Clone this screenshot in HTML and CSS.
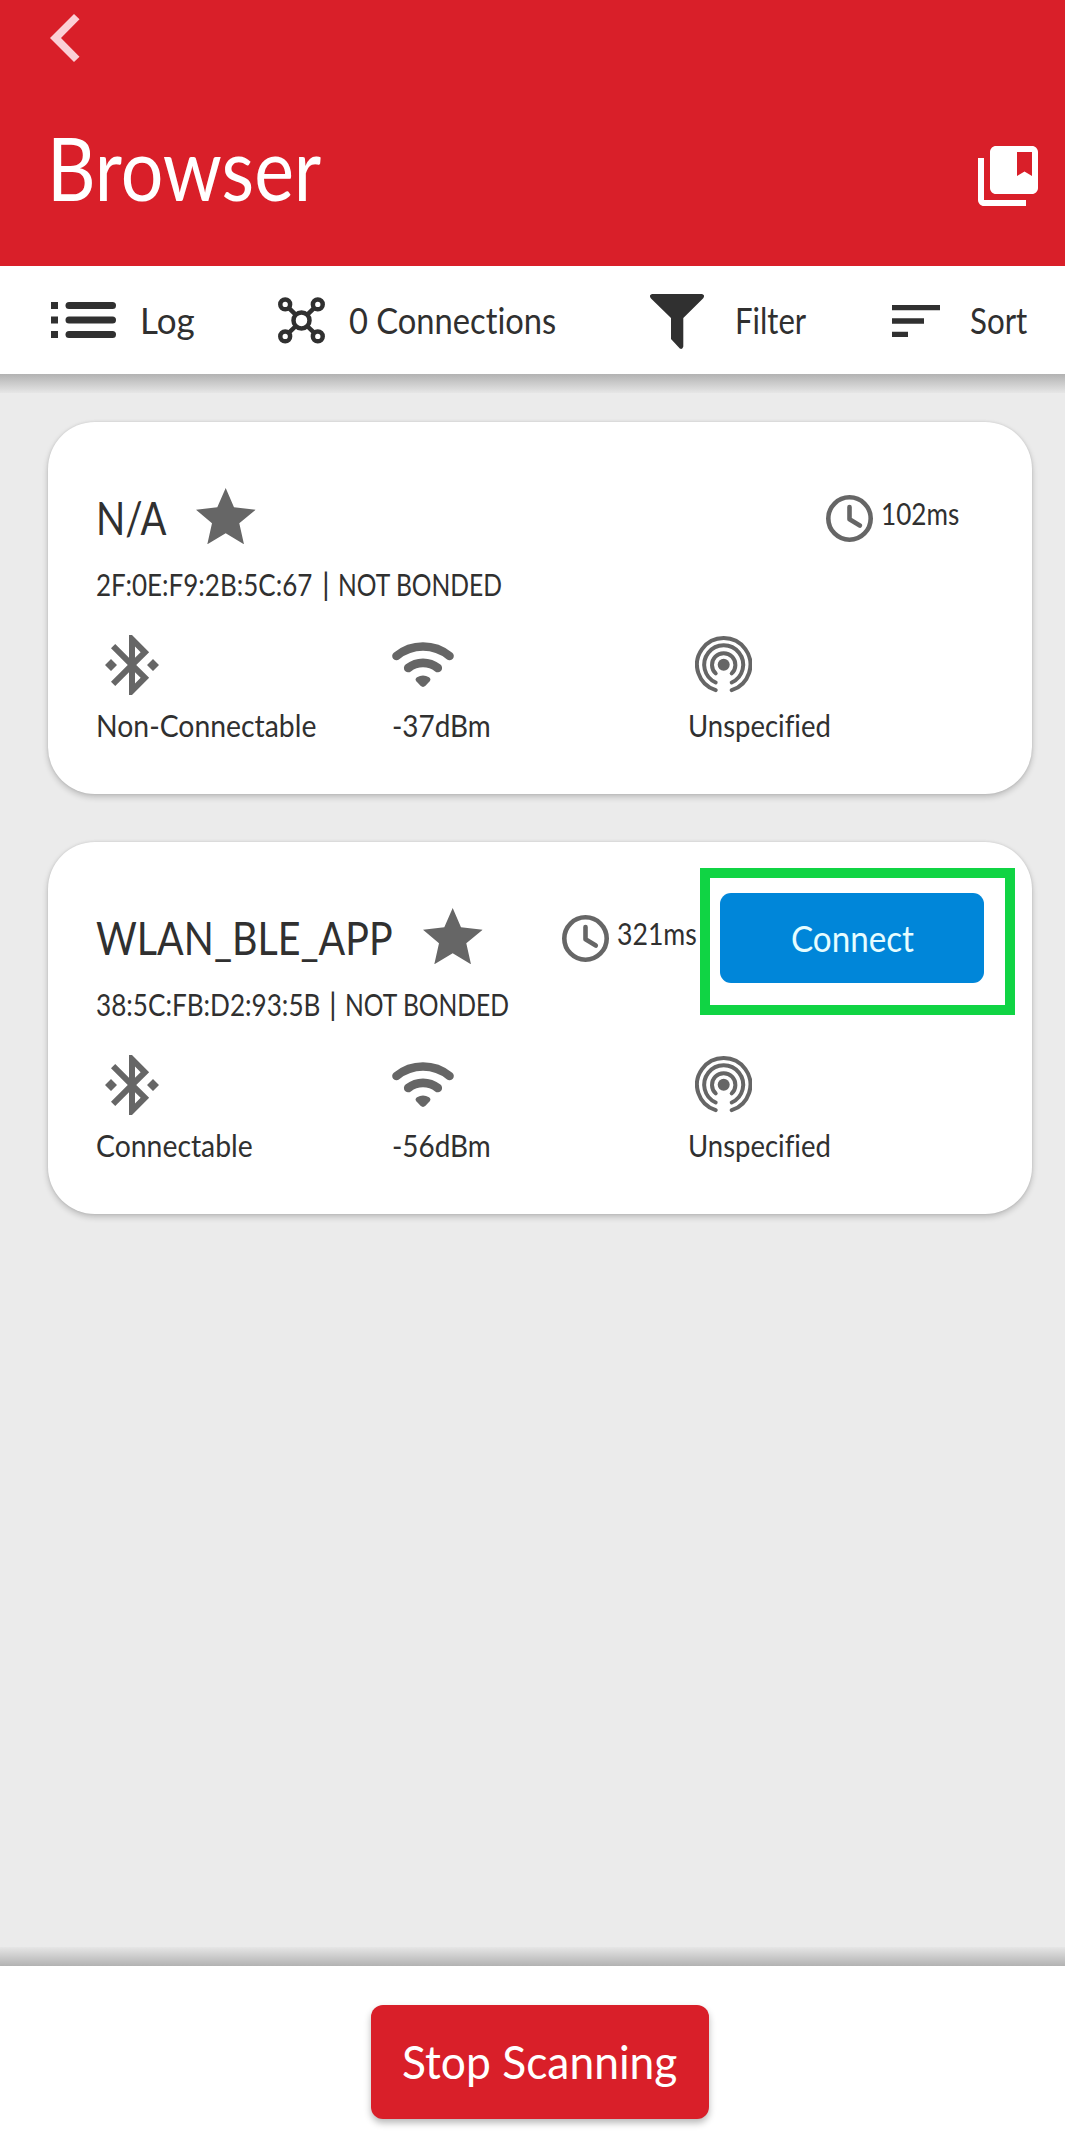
FILE: index.html
```html
<!DOCTYPE html>
<html lang="en">
<head>
<meta charset="utf-8">
<title>Browser</title>
<link rel="stylesheet" href="styles.css">
</head>
<body>
<svg class="sprite" width="0" height="0" aria-hidden="true">
  <symbol id="star" viewBox="0 0 59.7 56.3"><path d="M29.7 0L38 19.3l21.7 2.4-16.4 13.6L48 56.3l-18.3-11-18.4 11 4.7-21L0 21.7l21.3-2.4Z"/></symbol>
  <symbol id="clock" viewBox="0 0 47 47"><g fill="none" stroke="currentColor" stroke-width="4.6" stroke-linecap="round" stroke-linejoin="round"><circle cx="23.5" cy="23.5" r="21.2"/><path d="M23.5 12v12.3l10.3 6.2"/></g></symbol>
  <symbol id="bluetooth" viewBox="0 0 24 24"><path d="M7 12l-2-2-2 2 2 2 2-2zm10.71-4.29L12 2h-1v7.59L6.41 5 5 6.41 10.59 12 5 17.59 6.41 19 11 14.41V22h1l5.71-5.71-4.3-4.29 4.3-4.29zM13 5.83l1.88 1.88L13 9.59V5.83zm1.88 10.46L13 18.17v-3.76l1.88 1.88zM19 10l-2 2 2 2 2-2-2-2z"/></symbol>
  <symbol id="wifi" viewBox="0 0 62 45"><g fill="none" stroke="currentColor" stroke-width="8.6" stroke-linecap="round"><path d="M4.5 14A41.7 41.7 0 0 1 57.5 14"/><path d="M16.2 26A24 24 0 0 1 45.8 26"/></g><path d="M25 35.2Q31 32 37 35.2Q39.5 37 37.5 39.5L33.5 43.8Q31 46 28.5 43.8L24.5 39.5Q22.5 37 25 35.2Z"/></symbol>
  <symbol id="beacon" viewBox="0 0 57.4 57.4"><circle cx="28.7" cy="28.7" r="6"/><g fill="none" stroke="currentColor" stroke-width="4" stroke-linecap="round"><path d="M20.7 54.2A26.7 26.7 0 1 1 36.7 54.2"/><path d="M20.7 46.5A19.5 19.5 0 1 1 36.7 46.5"/><path d="M20.7 37.4A11.7 11.7 0 1 1 36.7 37.4"/></g></symbol>
</svg>

<header class="header">
  <svg class="back" width="30" height="48" viewBox="0 0 30 48"><path d="M24 0l5.5 5.2L11 24l18.5 18.8L24 48 0 24Z"/></svg>
  <div class="title-row">
    <h1 class="text title">Browser</h1>
    <svg width="60" height="60" viewBox="2 2 20 20"><path d="M4 6H2v14c0 1.1.9 2 2 2h14v-2H4V6zM20 2H8c-1.1 0-2 .9-2 2v12c0 1.1.9 2 2 2h12c1.1 0 2-.9 2-2V4c0-1.1-.9-2-2-2zm0 10l-2.5-1.5L15 12V4h5v8z"/></svg>
  </div>
</header>

<nav class="toolbar">
  <div class="tool log">
    <svg width="65" height="36" viewBox="0 0 65 36"><path d="M0 0h7v7H0zM0 14.5h7v7H0zM0 29h7v7H0z"/><rect x="14.5" width="50.5" height="7" rx="3.5"/><rect x="14.5" y="14.5" width="50.5" height="7" rx="3.5"/><rect x="14.5" y="29" width="50.5" height="7" rx="3.5"/></svg>
    <span class="text">Log</span>
  </div>
  <div class="tool connections">
    <svg width="47" height="47" viewBox="0 0 47 47"><g fill="none" stroke="currentColor" stroke-width="4.5"><circle cx="7.2" cy="7.4" r="4.9"/><circle cx="39.8" cy="7.4" r="4.9"/><circle cx="7.2" cy="39.4" r="4.9"/><circle cx="39.8" cy="39.4" r="4.9"/><circle cx="23.5" cy="23.4" r="8"/><path d="M10.7 10.9l7.2 6.9M36.3 10.9l-7.2 6.9M10.7 35.9l7.2-6.9M36.3 35.9l-7.2-6.9"/></g></svg>
    <span class="text">0 Connections</span>
  </div>
  <div class="tool filter">
    <svg width="54" height="55" viewBox="0 0 54 55"><path d="M2 0H52q3.5 1 1 4.5L33.3 24v28.500q-.8 3.500-3.500 2L21 45V24L1 4.500Q-1.500 1 2 0Z"/></svg>
    <span class="text">Filter</span>
  </div>
  <div class="tool sort">
    <svg width="48" height="32" viewBox="0 0 48 32"><path d="M0 0h48v5.300H0zM0 13.300h32v5.400H0zM0 26.700h16V32H0z"/></svg>
    <span class="text">Sort</span>
  </div>
</nav>

<main class="devices">
  <article class="card">
    <div class="card-head">
      <h2 class="text name name-na">N/A</h2>
      <svg class="star" width="59.700" height="56.300"><use href="#star"/></svg>
      <div class="interval">
        <svg width="47" height="47"><use href="#clock"/></svg>
        <span class="text ms-102">102ms</span>
      </div>
    </div>
    <p class="address"><span class="text mac mac-a">2F:0E:F9:2B:5C:67</span> <span class="divider">|</span> <span class="text bond">NOT BONDED</span></p>
    <div class="stats">
      <div class="stat"><svg width="72" height="72"><use href="#bluetooth"/></svg><span class="text wide">Non-Connectable</span></div>
      <div class="stat"><svg class="wifi" width="62" height="45"><use href="#wifi"/></svg><span class="text signal">-37dBm</span></div>
      <div class="stat"><svg class="beacon" width="57.400" height="57.400"><use href="#beacon"/></svg><span class="text kind">Unspecified</span></div>
    </div>
  </article>

  <article class="card">
    <div class="card-head">
      <h2 class="text name name-wlan">WLAN_BLE_APP</h2>
      <svg class="star" width="59.700" height="56.300"><use href="#star"/></svg>
      <div class="interval">
        <svg width="47" height="47"><use href="#clock"/></svg>
        <span class="text ms-321">321ms</span>
      </div>
      <button class="connect"><span class="text">Connect</span></button>
    </div>
    <p class="address"><span class="text mac mac-b">38:5C:FB:D2:93:5B</span> <span class="divider">|</span> <span class="text bond">NOT BONDED</span></p>
    <div class="stats">
      <div class="stat"><svg width="72" height="72"><use href="#bluetooth"/></svg><span class="text wide">Connectable</span></div>
      <div class="stat"><svg class="wifi" width="62" height="45"><use href="#wifi"/></svg><span class="text signal">-56dBm</span></div>
      <div class="stat"><svg class="beacon" width="57.400" height="57.400"><use href="#beacon"/></svg><span class="text kind">Unspecified</span></div>
    </div>
  </article>
</main>

<footer class="footer">
  <button class="stop"><span class="text">Stop Scanning</span></button>
</footer>
</body>
</html>
```
FILE: styles.css
```css
* { box-sizing: border-box; }
body {
  margin: 0;
  height: 2134px;
  display: flex;
  flex-direction: column;
  background: #ebebeb;
  color: #303030;
  font-family: Lato, "Liberation Sans", sans-serif;
  font-variant-ligatures: none;
}
h1, h2, p { margin: 0; font-weight: 400; }
button { border: 0; padding: 0; font: inherit; font-variant-ligatures: none; text-align: left; }
svg { display: block; flex: none; fill: currentColor; }
.sprite { position: absolute; }

/* Condensed lettering: each label has its set width and a horizontal scale */
.text {
  display: block;
  flex: none;
  white-space: nowrap;
  transform: scaleX(var(--k, 1));
  transform-origin: 0 0;
}

.header {
  height: 266px;
  padding: 14px 27px 0 47px;
  background: #d91f29;
  color: #fff;
}
.back { margin-left: 3px; color: #fbd0d6; }
.title-row {
  display: flex;
  align-items: center;
  justify-content: space-between;
  margin-top: 61px;
}
.title { width: 273px; font-size: 88px; line-height: 88px; --k: .855; }
.title-row svg { margin-top: 18px; }

.toolbar {
  position: relative;
  height: 108px;
  display: flex;
  align-items: center;
  padding-left: 51px;
  background: #fff;
}
.toolbar::after {
  content: "";
  position: absolute;
  left: 0;
  right: 0;
  top: 100%;
  height: 19px;
  background: linear-gradient(#b2b2b2, #e6e6e6);
}
.tool { display: flex; align-items: center; font-size: 36px; line-height: 40px; }
.log { gap: 24px; }
.log .text { width: 54.6px; --k: .972; }
.connections { gap: 24px; margin-left: 83.4px; }
.connections .text { width: 208px; --k: .908; }
.filter { gap: 31px; margin-left: 93px; }
.filter svg { margin-top: 3px; }
.filter .text { width: 71.2px; --k: .864; }
.sort { gap: 30px; margin-left: 85.8px; }
.sort svg { margin-top: 2px; }
.sort .text { width: 57.3px; --k: .87; }

.devices {
  flex: 1;
  display: flex;
  flex-direction: column;
  gap: 48px;
  padding: 48px 33px 0 48px;
}
.card {
  height: 372px;
  padding: 66px 48px 0;
  border-radius: 47px;
  background: #fff;
  box-shadow: 0 3px 6px rgba(0, 0, 0, .2), 0 0 3px rgba(0, 0, 0, .1);
}
.card-head { display: flex; align-items: flex-start; height: 57px; }
.name { margin-top: 5px; font-size: 47px; line-height: 48px; }
.name-na { width: 70px; --k: .815; }
.name-wlan { width: 297px; --k: .839; }
.star { margin-left: 30px; color: #666; }
.interval {
  display: flex;
  gap: 8px;
  margin: 7px 24px 0 auto;
  font-size: 31px;
  line-height: 32px;
}
.interval svg { color: #666; }
.interval .text { margin-top: 2px; }
.ms-102 { width: 79px; --k: .843; }
.ms-321 { width: 79px; --k: .859; }
.connect {
  position: relative;
  flex: none;
  width: 264px;
  height: 90px;
  margin-top: -15px;
  padding: 0 0 0 71px;
  border-radius: 11px;
  background: #0086d9;
  color: #e6fdff;
  font-size: 37px;
  line-height: 40px;
}
.connect .text { width: 123px; --k: .897; }
/* Highlight frame over the connect action */
.connect::after {
  content: "";
  position: absolute;
  inset: -25px -31px -32px -20px;
  border: 10px solid #10d444;
}
.address { display: flex; margin-top: 23px; font-size: 31px; line-height: 32px; }
.mac { --k: .838; }
.mac-a { width: 215.5px; }
.mac-b { width: 222.500px; --k: .842; }
.divider { width: 10px; margin: 0 7px 0 9.5px; text-align: center; }
.bond { width: 166px; --k: .795; }
.stats { display: grid; grid-template-columns: repeat(3, 296px); margin-top: 29px; }
.stat {
  display: flex;
  flex-direction: column;
  height: 112px;
  justify-content: space-between;
  color: #666;
}
.stat .text { color: #303030; font-size: 31px; line-height: 32px; }
.wifi { margin-top: 13px; }
.beacon { margin: 7px 0 0 7px; }
.wide { width: 220px; --k: .915; }
.signal { width: 99px; --k: .899; }
.kind { width: 143px; --k: .887; }

.footer {
  position: relative;
  height: 168px;
  padding: 39px 0 0 371px;
  background: #fff;
}
.footer::before {
  content: "";
  position: absolute;
  left: 0;
  right: 0;
  bottom: 100%;
  height: 19px;
  background: linear-gradient(#e6e6e6, #b2b2b2);
}
.stop {
  display: block;
  width: 338px;
  height: 114px;
  padding: 0 0 3px 30.5px;
  border-radius: 12px;
  background: #d91f29;
  color: #fff;
  font-size: 46.5px;
  line-height: 48px;
  box-shadow: 0 4px 7px rgba(0, 0, 0, .28);
}
.stop .text { width: 274px; --k: .954; }
```
